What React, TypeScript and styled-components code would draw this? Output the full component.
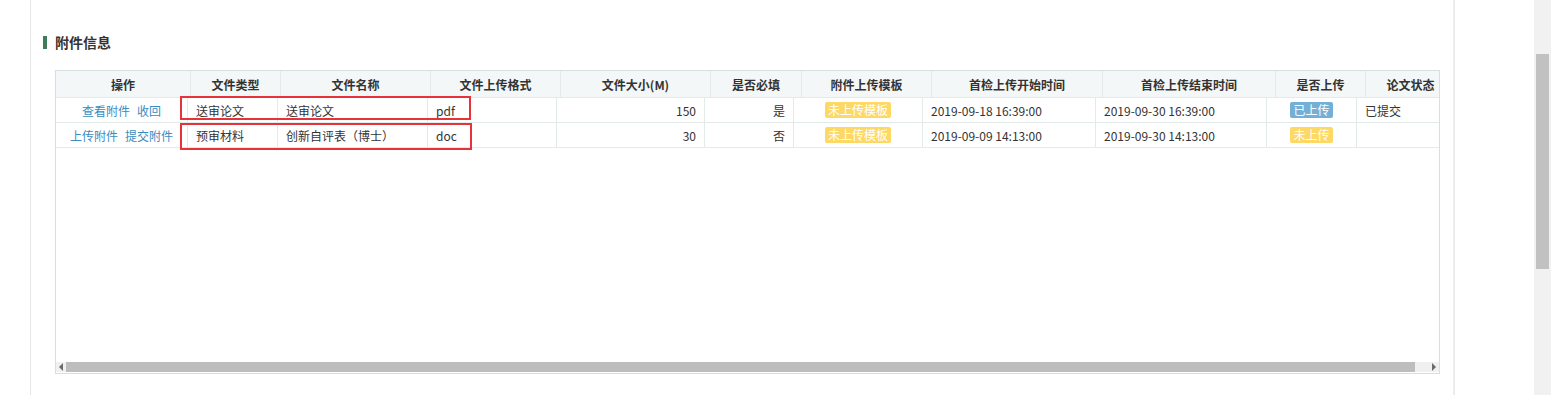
import styled, { createGlobalStyle } from 'styled-components';

const GlobalStyle = createGlobalStyle`
  html, body {
    margin: 0;
    padding: 0;
    background: #fff;
  }
  body {
    font-family: "Noto Sans CJK SC", "Noto Sans", "Liberation Sans", sans-serif;
    font-size: 12px;
    color: #333;
  }
`;

// column widths, header and body are a bit off from each other (like the original grid)
const HEAD_COLS = '135px 90px 150px 130px 150px 91px 130px 171px 173px 90px 90px';
const BODY_COLS = '132px 90px 150px 129px 148px 89px 129px 173px 171px 90px 90px';

const Page = styled.div`
  display: flex;
  width: 1551px;
  height: 395px;
  overflow: hidden;
`;

const Main = styled.div`
  flex: 1;
  padding-left: 30px;
`;

const Panel = styled.section`
  width: 1425px;
  height: 100%;
  box-sizing: border-box;
  border-left: 1px solid #e6e6e6;
  border-right: 2px solid #ececec;
  padding: 35px 0 0 12px;
`;

const SectionTitle = styled.h3`
  display: flex;
  align-items: center;
  gap: 8px;
  margin: 0;
  height: 14px;
  font-size: 14px;
  font-weight: bold;
  color: #333;
  line-height: 14px;

  &::before {
    content: '';
    width: 4px;
    height: 13px;
    background: #3f7d5a;
  }
`;

const TableBox = styled.div`
  position: relative;
  display: flex;
  flex-direction: column;
  margin: 21px 0 0 12px;
  width: 1385px;
  height: 304px;
  box-sizing: border-box;
  border: 1px solid #d6e0e0;
  overflow: hidden;
`;

const Row = styled.div<{ cols: string; head?: boolean }>`
  display: grid;
  grid-template-columns: ${(p) => p.cols};
  height: ${(p) => (p.head ? '27px' : '25px')};
  background: ${(p) => (p.head ? '#f4f7f7' : '#fff')};
  font-weight: ${(p) => (p.head ? 'bold' : 'normal')};
`;

const Cell = styled.div<{ align?: 'left' | 'center' | 'right' }>`
  display: flex;
  align-items: center;
  justify-content: ${(p) =>
    p.align === 'right' ? 'flex-end' : p.align === 'left' ? 'flex-start' : 'center'};
  box-sizing: border-box;
  padding: 0 8px;
  border-right: 1px solid #e2eaea;
  border-bottom: 1px solid #e2eaea;
  white-space: nowrap;
  overflow: hidden;
`;

const Link = styled.a`
  color: #3b8cc0;
  cursor: pointer;
  & + & {
    margin-left: 7px;
  }
`;

const Badge = styled.span<{ tone: 'yellow' | 'blue' }>`
  display: inline-block;
  padding: 0 3px;
  height: 16px;
  line-height: 16px;
  border-radius: 2px;
  color: #fff;
  background: ${(p) => (p.tone === 'blue' ? '#74afd6' : '#fdd865')};
`;

const Filler = styled.div`
  flex: 1;
`;

const HScroll = styled.div`
  display: flex;
  height: 10px;
  margin-bottom: 1px;
  background: #f0f0f0;
`;

const ArrowBtn = styled.div<{ dir: 'left' | 'right' }>`
  width: 10px;
  display: flex;
  align-items: center;
  justify-content: center;

  &::after {
    content: '';
    width: 0;
    height: 0;
    border-top: 4px solid transparent;
    border-bottom: 4px solid transparent;
    ${(p) =>
      p.dir === 'left' ? 'border-right: 4px solid #6a6a6a;' : 'border-left: 4px solid #6a6a6a;'}
  }
`;

const Thumb = styled.div`
  width: 1349px;
  background: #bdbdbd;
`;

const Track = styled.div`
  flex: 1;
`;

const Marker = styled.div<{ x: number; y: number; w: number; h: number }>`
  position: absolute;
  left: ${(p) => p.x}px;
  top: ${(p) => p.y}px;
  width: ${(p) => p.w}px;
  height: ${(p) => p.h}px;
  box-sizing: border-box;
  border: 2px solid #e8323a;
  pointer-events: none;
`;

const VScroll = styled.div`
  width: 17px;
  background: #f1f1f1;
  padding-top: 54px;
  box-sizing: border-box;
`;

const VThumb = styled.div`
  width: 13px;
  height: 215px;
  margin-left: 2px;
  background: #c1c1c1;
`;

type Attach = {
  actions: string[];
  type: string;
  name: string;
  format: string;
  size: number;
  required: string;
  start: string;
  end: string;
  uploaded: boolean;
  status: string;
};

const heads = [
  '操作',
  '文件类型',
  '文件名称',
  '文件上传格式',
  '文件大小(M)',
  '是否必填',
  '附件上传模板',
  '首检上传开始时间',
  '首检上传结束时间',
  '是否上传',
  '论文状态',
];

const rows: Attach[] = [
  {
    actions: ['查看附件', '收回'],
    type: '送审论文',
    name: '送审论文',
    format: 'pdf',
    size: 150,
    required: '是',
    start: '2019-09-18 16:39:00',
    end: '2019-09-30 16:39:00',
    uploaded: true,
    status: '已提交',
  },
  {
    actions: ['上传附件', '提交附件'],
    type: '预审材料',
    name: '创新自评表（博士）',
    format: 'doc',
    size: 30,
    required: '否',
    start: '2019-09-09 14:13:00',
    end: '2019-09-30 14:13:00',
    uploaded: false,
    status: '',
  },
];

export default function App() {
  return (
    <Page>
      <GlobalStyle />
      <Main>
        <Panel>
          <SectionTitle>附件信息</SectionTitle>
          <TableBox>
            <Row cols={HEAD_COLS} head>
              {heads.map((h) => (
                <Cell key={h}>{h}</Cell>
              ))}
            </Row>
            {rows.map((r) => (
              <Row cols={BODY_COLS} key={r.name}>
                <Cell>
                  {r.actions.map((a) => (
                    <Link key={a}>{a}</Link>
                  ))}
                </Cell>
                <Cell align="left">{r.type}</Cell>
                <Cell align="left">{r.name}</Cell>
                <Cell align="left">{r.format}</Cell>
                <Cell align="right">{r.size}</Cell>
                <Cell align="right">{r.required}</Cell>
                <Cell>
                  <Badge tone="yellow">未上传模板</Badge>
                </Cell>
                <Cell align="left">{r.start}</Cell>
                <Cell align="left">{r.end}</Cell>
                <Cell>
                  <Badge tone={r.uploaded ? 'blue' : 'yellow'}>
                    {r.uploaded ? '已上传' : '未上传'}
                  </Badge>
                </Cell>
                <Cell align="left">{r.status}</Cell>
              </Row>
            ))}
            <Filler />
            <HScroll>
              <ArrowBtn dir="left" />
              <Thumb />
              <Track />
              <ArrowBtn dir="right" />
            </HScroll>
            <Marker x={124} y={25} w={291} h={24} />
            <Marker x={124} y={52} w={292} h={27} />
          </TableBox>
        </Panel>
      </Main>
      <VScroll>
        <VThumb />
      </VScroll>
    </Page>
  );
}
